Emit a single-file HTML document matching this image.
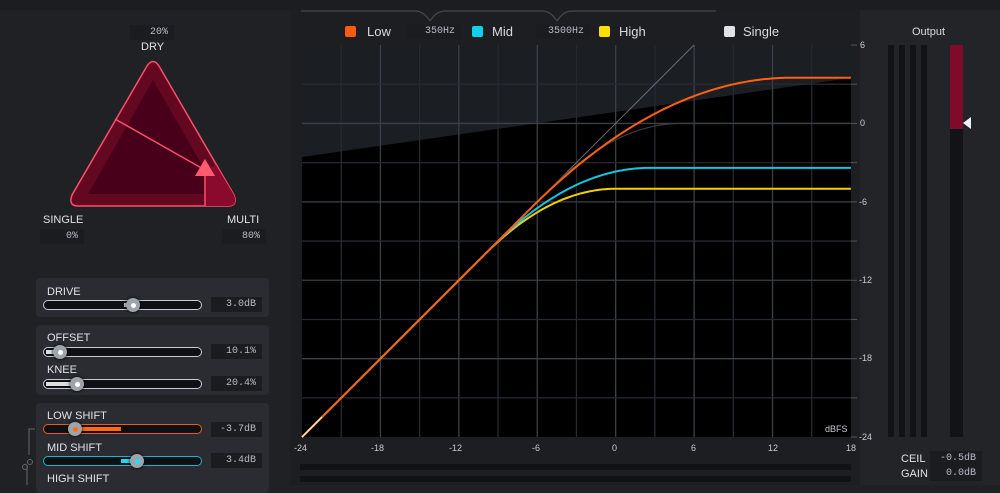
<!DOCTYPE html>
<html><head><meta charset="utf-8"><style>
body{margin:0;width:1000px;height:485px;overflow:hidden;background:#1f2125;font-family:"Liberation Sans",sans-serif;color:#d8dae0;position:relative}
.a{position:absolute}
.lbl{font-size:11px;color:#e0e2e8}
.vb{position:absolute;background:#1a1c20;font-family:"Liberation Mono",monospace;font-size:10px;color:#b8bcc4;text-align:right;padding-right:6px;box-sizing:border-box;height:15px;line-height:15px}
.box{position:absolute;background:#2a2c31;border-radius:4px}
.trk{position:absolute;height:8px;border:1.5px solid #c8cbd2;border-radius:6px;background:#0f1013}
.knob{position:absolute;width:14px;height:14px;border-radius:50%;background:#9ea3ac;box-shadow:0 0 3px #000}
.knob i{position:absolute;left:4.5px;top:4.5px;width:5px;height:5px;border-radius:50%;background:#fff}
.mono{font-family:"Liberation Mono",monospace}
.ax{position:absolute;font-size:9px;color:#c8cbd2}
</style></head><body>
<div class="a" style="left:0;top:0;width:1000px;height:10px;background:#1b1d21"></div>
<div class="a" style="left:290px;top:10px;width:570px;height:475px;background:#1c1e22"></div>
<div class="a" style="left:860px;top:10px;width:140px;height:475px;background:#222428"></div>

<div class="vb" style="left:130px;top:25px;width:44px">20%</div>
<div class="a lbl" style="left:141px;top:41px">DRY</div>
<svg class="a" style="left:0;top:0" width="290" height="260">
<path d="M147,66 Q153,57 159,66 L234,195 Q238,206 228,206 L78,206 Q68,206 72,195 Z" fill="#640822" stroke="#ff4d6a" stroke-width="1.5"/>
<path d="M153,80 L205,170 L205,194 L88,194 Z" fill="#48001a"/>
<path d="M205,170 L216,165 L234,195 Q238,206 228,206 L205,206 Z" fill="#8a0a2e"/>
<path d="M115,119 L205,170 L205,206" fill="none" stroke="#ff4d6a" stroke-width="1.5"/>
<path d="M205,159 L215,176 L195,176 Z" fill="#ff5a6e"/>
</svg>
<div class="a lbl" style="left:43px;top:214px">SINGLE</div>
<div class="vb" style="left:40px;top:229px;width:44px">0%</div>
<div class="a lbl" style="left:227px;top:214px">MULTI</div>
<div class="vb" style="left:222px;top:229px;width:44px">80%</div>

<div class="box" style="left:36px;top:278px;width:233px;height:39px"></div>
<div class="a lbl" style="left:47px;top:286px">DRIVE</div>
<div class="trk" style="left:43px;top:300px;width:157px"></div>
<div class="a" style="left:124px;top:303px;width:10px;height:4px;background:#ddd"></div>
<div class="knob" style="left:126px;top:298px"><i></i></div>
<div class="vb" style="left:211px;top:297px;width:51px">3.0dB</div>

<div class="box" style="left:36px;top:325px;width:233px;height:70px"></div>
<div class="a lbl" style="left:47px;top:332px">OFFSET</div>
<div class="trk" style="left:43px;top:347px;width:157px"></div>
<div class="a" style="left:46px;top:350px;width:12px;height:4px;background:#ddd"></div>
<div class="knob" style="left:53px;top:345px"><i></i></div>
<div class="vb" style="left:211px;top:344px;width:51px">10.1%</div>
<div class="a lbl" style="left:47px;top:364px">KNEE</div>
<div class="trk" style="left:43px;top:379px;width:157px"></div>
<div class="a" style="left:46px;top:382px;width:28px;height:4px;background:#ddd"></div>
<div class="knob" style="left:70px;top:377px"><i></i></div>
<div class="vb" style="left:211px;top:376px;width:51px">20.4%</div>

<div class="box" style="left:36px;top:403px;width:233px;height:90px"></div>
<div class="a lbl" style="left:47px;top:410px">LOW SHIFT</div>
<div class="trk" style="left:43px;top:424px;width:157px;border-color:#e8600f"></div>
<div class="a" style="left:76px;top:427px;width:45px;height:4px;background:#ff6a10"></div>
<div class="knob" style="left:68px;top:422px"><i style="background:#ff7010"></i></div>
<div class="vb" style="left:211px;top:422px;width:51px">-3.7dB</div>
<div class="a lbl" style="left:47px;top:442px">MID SHIFT</div>
<div class="trk" style="left:43px;top:456px;width:157px;border-color:#10b8d0"></div>
<div class="a" style="left:121px;top:459px;width:15px;height:4px;background:#20d8f0"></div>
<div class="knob" style="left:130px;top:454px"><i style="background:#20e0ff"></i></div>
<div class="vb" style="left:211px;top:453px;width:51px">3.4dB</div>
<div class="a lbl" style="left:47px;top:473px">HIGH SHIFT</div>
<svg class="a" style="left:20px;top:425px" width="20" height="60"><path d="M15,4 L9,4 L9,30 M7,40 L7,60" stroke="#666" fill="none"/><circle cx="5" cy="42" r="2.5" stroke="#666" fill="none"/><circle cx="10" cy="37" r="2.5" stroke="#666" fill="none"/></svg>

<svg class="a" style="left:290px;top:0" width="560" height="30"><path d="M11,11 L125,11 Q132,11 137,17 L140,21 M140,21 L143,17 Q148,11 155,11 L252,11 Q259,11 264,17 L267,21 M267,21 L270,17 Q275,11 282,11 L426,11" stroke="#44474e" fill="none" stroke-width="1.2"/></svg>
<div class="a" style="left:345px;top:26px;width:11px;height:11px;background:#ff5a10;border-radius:2px"></div>
<div class="a" style="left:367px;top:24px;font-size:13px">Low</div>
<div class="vb mono" style="left:407px;top:24px;width:54px;height:15px">350Hz</div>
<div class="a" style="left:472px;top:26px;width:11px;height:11px;background:#10d0ea;border-radius:2px"></div>
<div class="a" style="left:492px;top:24px;font-size:13px">Mid</div>
<div class="vb mono" style="left:536px;top:24px;width:54px">3500Hz</div>
<div class="a" style="left:599px;top:26px;width:11px;height:11px;background:#ffe000;border-radius:2px"></div>
<div class="a" style="left:619px;top:24px;font-size:13px">High</div>
<div class="a" style="left:724px;top:26px;width:11px;height:11px;background:#e0e2e8;border-radius:2px"></div>
<div class="a" style="left:743px;top:24px;font-size:13px">Single</div>

<svg id="g" class="a" style="left:0;top:0" width="1000" height="485"></svg>

<div class="ax" style="left:294px;top:443px">-24</div>
<div class="ax" style="left:371px;top:443px">-18</div>
<div class="ax" style="left:449px;top:443px">-12</div>
<div class="ax" style="left:532px;top:443px">-6</div>
<div class="ax" style="left:612px;top:443px">0</div>
<div class="ax" style="left:691px;top:443px">6</div>
<div class="ax" style="left:768px;top:443px">12</div>
<div class="ax" style="left:846px;top:443px">18</div>
<div class="ax" style="left:825px;top:424px">dBFS</div>
<div class="ax" style="left:860px;top:40px">6</div>
<div class="ax" style="left:860px;top:118px">0</div>
<div class="ax" style="left:859px;top:197px">-6</div>
<div class="ax" style="left:859px;top:275px">-12</div>
<div class="ax" style="left:859px;top:353px">-18</div>
<div class="ax" style="left:859px;top:432px">-24</div>
<div class="a" style="left:300px;top:464px;width:551px;height:6px;background:#111215"></div>
<div class="a" style="left:300px;top:476px;width:551px;height:6px;background:#111215"></div>

<div class="a" style="left:912px;top:26px;font-size:11px">Output</div>
<div class="a" style="left:888px;top:45px;width:6px;height:392px;background:#121316"></div>
<div class="a" style="left:899px;top:45px;width:6px;height:392px;background:#121316"></div>
<div class="a" style="left:910px;top:45px;width:6px;height:392px;background:#121316"></div>
<div class="a" style="left:921px;top:45px;width:6px;height:392px;background:#121316"></div>
<div class="a" style="left:950px;top:45px;width:13px;height:392px;background:#121316"></div>
<div class="a" style="left:950px;top:45px;width:13px;height:84px;background:#800a2a"></div>
<svg class="a" style="left:962px;top:117px" width="10" height="12"><path d="M9,0 L1,6 L9,12 Z" fill="#f0f0f0"/></svg>
<div class="a lbl" style="left:901px;top:453px;font-size:11px">CEIL</div>
<div class="vb" style="left:930px;top:451px;width:52px">-0.5dB</div>
<div class="a lbl" style="left:901px;top:468px;font-size:11px">GAIN</div>
<div class="vb" style="left:930px;top:466px;width:52px">0.0dB</div>

<script>
var s='<rect x="302" y="45" width="549" height="392" fill="#000"/>';
s+='<polygon points="302,45 851,45 851,78 302,157" fill="#1b1e23"/>';
var X=function(v){return 302+(v+24)*13.07},Y=function(v){return 45+(6-v)*13.07};
for(var v=-21;v<18;v+=3)s+='<line x1="'+X(v)+'" y1="45" x2="'+X(v)+'" y2="437" stroke="'+(v%6==0?'#3c4048':'#262a30')+'" stroke-width="1.3"/>';
for(var v=3;v>-24;v-=3)s+='<line x1="302" y1="'+Y(v)+'" x2="851" y2="'+Y(v)+'" stroke="'+(v%6==0?'#3c4048':'#262a30')+'" stroke-width="1.3"/>';
for(var v=6;v>=-24;v-=3)s+='<line x1="851" y1="'+Y(v)+'" x2="857" y2="'+Y(v)+'" stroke="#555" stroke-width="1"/>';
s+='<line x1="302" y1="437" x2="694" y2="45" stroke="#666a72" stroke-width="1"/>';
function c(T,W,col,w){var p='';for(var i=-24;i<=18.01;i+=0.25){var o;if(i<T-W/2)o=i;else if(i>T+W/2)o=T;else o=i-Math.pow(i-T+W/2,2)/(2*W);p+=(p?'L':'M')+X(i).toFixed(1)+','+Y(o).toFixed(1);}return '<path d="'+p+'" fill="none" stroke="'+col+'" stroke-width="'+w+'"/>';}
s+=c(0,10,'#3a3d44',1.2);
s+=c(-5,10,'#f0d000',2);
s+=c(-3.4,12,'#10c8e0',2);
s+=c(3.5,20,'#ff6010',2);
s+='<line x1="302" y1="437" x2="322" y2="417" stroke="#ffe0c0" stroke-width="1.5"/>';
document.getElementById('g').innerHTML=s;
</script>
</body></html>
